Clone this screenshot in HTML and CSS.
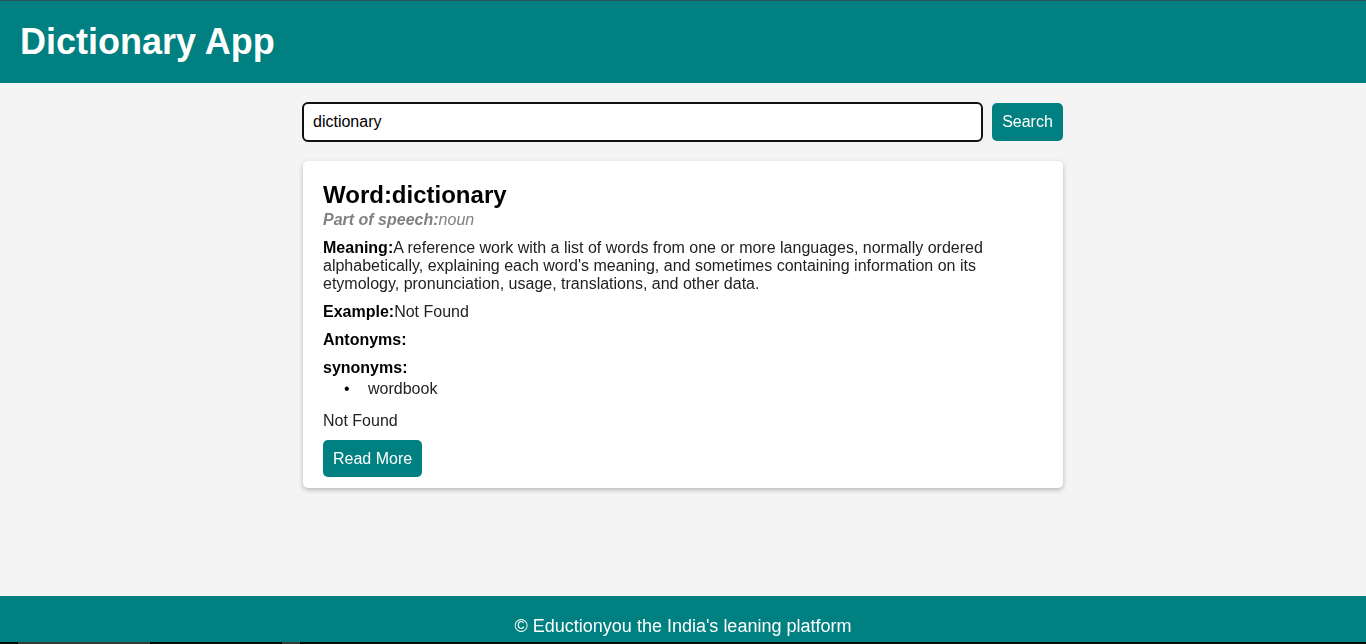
FILE: index.html
```html
<!DOCTYPE html>
<html>
<head>
<meta charset="utf-8">
<link rel="stylesheet" href="styles.css">
</head>
<body>
<header class="topbar">
  <h1 class="title">Dictionary App</h1>
</header>
<main class="main">
  <div class="container">
    <div class="search-row">
      <input class="search-input" type="text" value="dictionary" autofocus>
      <button class="btn search-btn">Search</button>
    </div>
    <div class="card">
      <h2 class="word">Word:dictionary</h2>
      <p class="pos"><strong>Part of speech:</strong>noun</p>
      <p class="line"><strong>Meaning:</strong>A reference work with a list of words from one or more languages, normally ordered alphabetically, explaining each word's meaning, and sometimes containing information on its etymology, pronunciation, usage, translations, and other data.</p>
      <p class="line"><strong>Example:</strong>Not Found</p>
      <p class="line"><strong>Antonyms:</strong></p>
      <p class="line syn"><strong>synonyms:</strong></p>
      <ul class="syn-list"><li class="syn-item">wordbook</li></ul>
      <p class="line nf">Not Found</p>
      <button class="btn more-btn">Read More</button>
    </div>
  </div>
</main>
<footer class="footer">
  <p class="foot-text">© Eductionyou the India's leaning platform</p>
</footer>
<div class="strip"><span class="seg seg1"></span><span class="seg seg2"></span></div>
</body>
</html>
```
FILE: styles.css
```css
* { box-sizing: border-box; }
html, body { margin: 0; padding: 0; }
body {
  background: #f4f4f4;
  font-family: "Liberation Sans", Arial, sans-serif;
  color: #222;
  height: 644px;
  display: flex;
  flex-direction: column;
  overflow: hidden;
}
.topbar {
  background: #008080;
  border-top: 1px solid #2f4f55;
  height: 83px;
  padding: 0 20px;
  display: flex;
  align-items: center;
}
.title {
  margin: 0;
  color: #fff;
  font-size: 36px;
  font-weight: bold;
  line-height: 41px;
  position: relative;
  top: -1px;
}
.main { flex: 1; }
.container {
  width: 760px;
  margin: 0 auto;
  padding-top: 19px;
}
.search-row {
  display: flex;
  gap: 9px;
  align-items: center;
  margin-left: -1px;
}
.search-input {
  flex: 1;
  height: 40px;
  border: 2px solid #111;
  border-radius: 6px;
  padding: 0 9px;
  font-family: "Liberation Sans", Arial, sans-serif;
  font-size: 16px;
  color: #000;
  background: #fff;
  outline: none;
}
.btn {
  background: #008080;
  color: #fff;
  border: none;
  border-radius: 5px;
  font-family: "Liberation Sans", Arial, sans-serif;
  font-size: 16px;
  padding: 0 10px;
  white-space: nowrap;
}
.search-btn { height: 38px; width: 71px; }
.card {
  margin-top: 19px;
  background: #fff;
  border-radius: 5px;
  box-shadow: 0 2px 5px rgba(0,0,0,0.25);
  padding: 20px 20px 11px;
}
.word {
  margin: 0;
  font-size: 24px;
  font-weight: bold;
  color: #000;
  line-height: 28px;
  padding-bottom: 2px;
}
.pos {
  margin: 0;
  font-size: 16px;
  font-style: italic;
  color: #808080;
  line-height: 18px;
}
.line {
  margin: 10px 0 0;
  font-size: 16px;
  line-height: 18px;
  color: #222;
}
.line strong { color: #000; }
.syn-list {
  margin: 3px 0 0;
  padding-left: 45px;
  font-size: 16px;
  line-height: 18px;
  list-style: none;
}
.syn-item::before {
  content: "•";
  display: inline-block;
  width: 24px;
  margin-left: -24px;
  color: #000;
}
.nf { margin-top: 14px; }
.more-btn {
  margin-top: 10px;
  height: 37px;
  width: 99px;
  display: block;
}
.footer {
  background: #008080;
  height: 46px;
  padding-top: 20px;
  text-align: center;
}
.foot-text {
  margin: 0;
  color: #fff;
  font-size: 18px;
  line-height: 21px;
}
.strip {
  height: 2px;
  background: #0a0a0a;
  display: flex;
}
.seg { height: 2px; background: #3a3a3a; }
.seg1 { margin-left: 18px; width: 132px; }
.seg2 { margin-left: 132px; width: 18px; }
```
